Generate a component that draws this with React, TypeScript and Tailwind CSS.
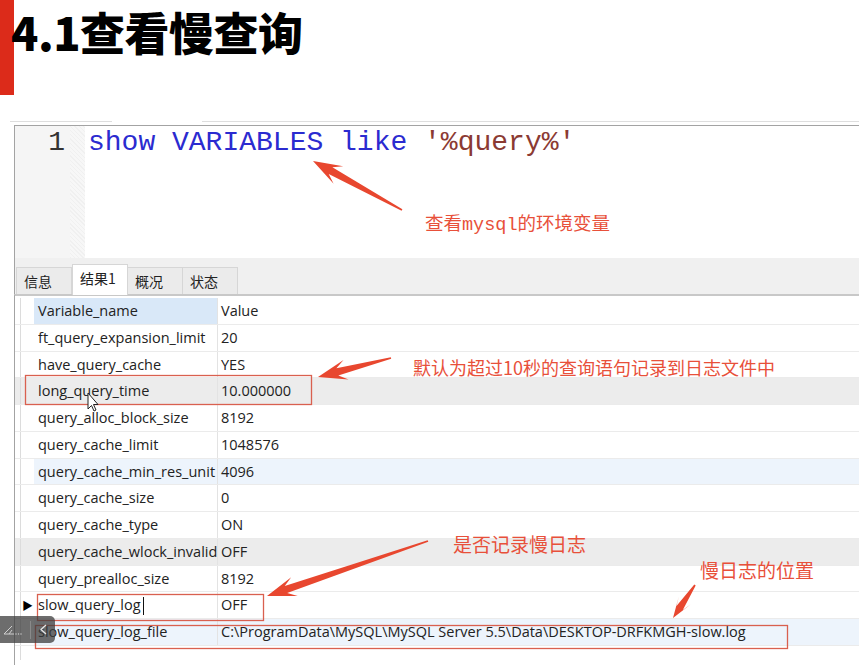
import React from "react";

type Row = { name: string; value: string; tone?: "gray" | "blue"; current?: boolean };

const rows: Row[] = [
  { name: "ft_query_expansion_limit", value: "20" },
  { name: "have_query_cache", value: "YES" },
  { name: "long_query_time", value: "10.000000", tone: "gray" },
  { name: "query_alloc_block_size", value: "8192" },
  { name: "query_cache_limit", value: "1048576" },
  { name: "query_cache_min_res_unit", value: "4096", tone: "blue" },
  { name: "query_cache_size", value: "0" },
  { name: "query_cache_type", value: "ON" },
  { name: "query_cache_wlock_invalidate", value: "OFF", tone: "gray" },
  { name: "query_prealloc_size", value: "8192" },
  { name: "slow_query_log", value: "OFF", current: true },
  { name: "slow_query_log_file", value: "C:\\ProgramData\\MySQL\\MySQL Server 5.5\\Data\\DESKTOP-DRFKMGH-slow.log", tone: "blue" },
];

const tabs = ["信息", "结果1", "概况", "状态"];

// tapered arrow like a screenshot tool draws it
function arrowPoints(x1: number, y1: number, x2: number, y2: number, head = 24, wing = 9) {
  const dx = x2 - x1;
  const dy = y2 - y1;
  const len = Math.hypot(dx, dy);
  const ux = dx / len;
  const uy = dy / len;
  const nx = -uy;
  const ny = ux;
  const p = (bx: number, by: number, along: number, side: number) =>
    `${(bx + ux * along + nx * side).toFixed(1)},${(by + uy * along + ny * side).toFixed(1)}`;
  return [
    p(x1, y1, 0, 0.8),
    p(x2, y2, -(head - 6), 3.8),
    p(x2, y2, -(head + 3), wing),
    p(x2, y2, 0, 0),
    p(x2, y2, -(head + 3), -wing),
    p(x2, y2, -(head - 6), -3.8),
    p(x1, y1, 0, -0.8),
  ].join(" ");
}

const red = "#e8472f";

const Annotations = () => (
  <div className="absolute inset-0 pointer-events-none">
    <svg width="859" height="665" className="absolute left-0 top-0">
      <polygon points={arrowPoints(402, 210, 313, 161, 26, 10)} fill={red} />
      <polygon points={arrowPoints(391, 358, 318, 377, 26, 10)} fill={red} />
      <polygon points={arrowPoints(428, 541, 267, 596, 26, 10)} fill={red} />
      <polygon points={arrowPoints(695, 585, 673, 618, 18, 7)} fill={red} />
      <rect x="25.5" y="375.5" width="286" height="29" fill="none" stroke="#d9604f" strokeWidth="1.3" />
      <rect x="37.5" y="594.5" width="226" height="26" fill="none" stroke="#d9604f" strokeWidth="1.3" />
      <rect x="35.5" y="625.5" width="752" height="23" fill="none" stroke="#d9604f" strokeWidth="1.3" />
      {/* mouse pointer */}
      <path d="M88 393 L88 409 L91.5 405.5 L94 411 L96 410 L93.5 404.5 L98 404.5 Z" fill="#fff" stroke="#222" strokeWidth="1" />
      {/* text caret */}
      <line x1="143.5" y1="597" x2="143.5" y2="615" stroke="#111" strokeWidth="1" />
    </svg>
    <span className="absolute left-[425px] top-[208px] text-[18.5px] leading-[28px] text-[#e8503a] font-['Noto_Sans_CJK_SC',sans-serif]">
      查看<span className="font-['Liberation_Mono',monospace]">mysql</span>的环境变量
    </span>
    <span className="absolute left-[413px] top-[353px] text-[18px] leading-[28px] text-[#e8503a] font-['Noto_Sans_CJK_SC',sans-serif]">
      默认为超过10秒的查询语句记录到日志文件中
    </span>
    <span className="absolute left-[453px] top-[530px] text-[19px] leading-[28px] text-[#e8503a] font-['Noto_Sans_CJK_SC',sans-serif]">
      是否记录慢日志
    </span>
    <span className="absolute left-[700px] top-[556px] text-[19px] leading-[28px] text-[#e8503a] font-['Noto_Sans_CJK_SC',sans-serif]">
      慢日志的位置
    </span>
    {/* player overlay widget */}
    <div className="absolute left-0 top-[616px] w-[55px] h-[27px] rounded-r-[5px] bg-[#3c3c3c]/75 flex items-center">
      <svg width="30" height="27" className="shrink-0">
        <path d="M4 18 L12 10 M4 18 L14 18 M9 18 L12 14" stroke="#cfcfcf" strokeWidth="1" fill="none" />
        <circle cx="16" cy="18" r="0.7" fill="#cfcfcf" />
        <circle cx="18.5" cy="18" r="0.7" fill="#cfcfcf" />
        <circle cx="21" cy="18" r="0.7" fill="#cfcfcf" />
      </svg>
      <div className="w-px h-[18px] bg-[#8a8a8a]" />
      <svg width="24" height="27" className="shrink-0">
        <path d="M15 9 L10 13.5 L15 18" stroke="#e6e6e6" strokeWidth="1.3" fill="none" />
      </svg>
    </div>
  </div>
);

const GridRow = ({ row }: { row: Row }) => {
  const rowBg = row.tone === "gray" ? "bg-[#ececec]" : "bg-white";
  const cellBg = row.tone === "blue" ? "bg-[#edf4fc]" : "";
  return (
    <div className={`flex h-[26.75px] border-b border-[#ebebeb] ${rowBg}`}>
      <div className="w-[5px]" />
      <div className="w-[14px] border-l border-[#dcdcdc] flex items-center justify-center">
        {row.current && <span className="text-[11px] text-black leading-none">▶</span>}
      </div>
      <div className={`w-[184px] border-r border-[#e3e3e3] pl-[4px] flex items-center overflow-hidden whitespace-nowrap ${cellBg}`}>
        <span className="block w-[179px] overflow-hidden">{row.name}</span>
      </div>
      <div className={`flex-1 pl-[3px] flex items-center whitespace-nowrap overflow-hidden ${cellBg}`}>{row.value}</div>
    </div>
  );
};

export default function App() {
  return (
    <div className="relative w-[859px] h-[665px] overflow-hidden bg-white">
      {/* title */}
      <div className="flex h-[95px]">
        <div className="w-[14px] h-full bg-[#dc2b1a]" />
        <h1 className="-ml-[3px] pt-[8px] text-[45px] leading-[48px] font-black tracking-[-0.5px] text-black font-['Noto_Sans_CJK_SC',sans-serif]">
          4.1查看慢查询
        </h1>
      </div>

      <div className="h-[26px]" />
      <div className="flex h-px">
        <div className="ml-[10px] w-[102px] bg-[#dedede]" />
        <div className="ml-[90px] flex-1 bg-[#dedede]" />
      </div>
      <div className="h-[3px]" />

      {/* editor */}
      <div className="ml-[14px] h-[133px] border-l border-t border-[#a3a3a3] flex">
        <div className="w-[55px] bg-[#f5f5f5] pr-[5px] text-right text-[28px] leading-[34px] text-[#333] font-['Liberation_Mono',monospace]">
          1
        </div>
        <div className="w-[15px] bg-[repeating-linear-gradient(45deg,#f0f0f0_0px,#f0f0f0_1px,#f7f7f7_1px,#f7f7f7_3px)]" />
        <div className="pl-[3px] text-[28px] leading-[34px] whitespace-pre font-['Liberation_Mono',monospace]">
          <span className="text-[#2b2bd0]">show VARIABLES like </span>
          <span className="text-[#8b3a33]">'%query%'</span>
        </div>
      </div>

      {/* tab band */}
      <div className="ml-[14px] h-[36px] bg-[#f0f0f0] border-l border-[#a3a3a3] flex items-end pl-[2px]">
        {tabs.map((t, i) => (
          <div
            key={t}
            className={`w-[56px] flex items-center pl-[7px] text-[14px] text-[#222] font-['Noto_Sans_CJK_SC',sans-serif] border-t border-l border-r border-[#d6d6d6] ${
              i === 1 ? "h-[31px] bg-white -mb-px pb-[3px]" : "h-[27px] bg-[#ebebeb] -ml-px"
            }`}
          >
            {t}
          </div>
        ))}
      </div>

      {/* result grid */}
      <div className="ml-[14px] border-l border-[#a3a3a3] border-t-2 border-t-[#c8c8c8] pt-[2px] h-[371px] text-[14.5px] text-[#222] font-['Open_Sans','Noto_Sans_CJK_SC',sans-serif]">
        <div className="flex h-[26.75px] border-b border-[#ebebeb]">
          <div className="w-[5px]" />
          <div className="w-[14px] border-l border-[#dcdcdc]" />
          <div className="w-[184px] bg-[#d9e8f8] border-r border-[#e3e3e3] pl-[4px] flex items-center">Variable_name</div>
          <div className="flex-1 pl-[3px] flex items-center">Value</div>
        </div>
        {rows.map((r) => (
          <GridRow key={r.name} row={r} />
        ))}
        <div className="flex h-[14px]">
          <div className="w-[5px]" />
          <div className="w-[14px] border-l border-[#dcdcdc]" />
        </div>
      </div>

      <Annotations />
    </div>
  );
}
